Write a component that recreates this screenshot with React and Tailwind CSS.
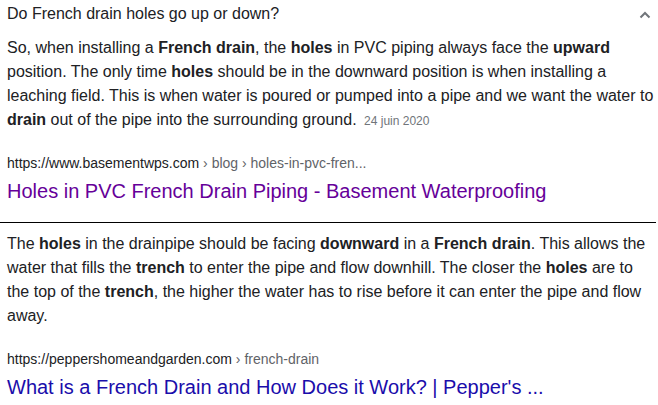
export default function App() {
  const font = { fontFamily: '"Liberation Sans", Arial, sans-serif' };
  return (
    <div className="w-[658px] h-[405px] bg-white overflow-hidden text-[#202124]" style={font}>
      <div className="pl-[7px] pr-[4px]">
        <div className="flex items-start justify-between mt-[2px] h-[24px]">
          <div className="text-[16px] leading-[24px] text-[#202124]">Do French drain holes go up or down?</div>
          <svg width="12" height="8" viewBox="0 0 12 8" className="mt-[9px] mr-[3px]">
            <path d="M1.5 6.5 L6 2 L10.5 6.5" fill="none" stroke="#70757a" strokeWidth="2" />
          </svg>
        </div>
        <div className="mt-[10px] text-[16px] leading-[24px] text-[#202124]">
          So, when installing a <b>French drain</b>, the <b>holes</b> in PVC piping always face the <b>upward</b> position. The only time <b>holes</b> should be in the downward position is when installing a leaching field. This is when water is poured or pumped into a pipe and we want the water to <b>drain</b> out of the pipe into the surrounding ground.{" "}
          <span className="text-[12px] text-[#70757a] ml-[3px]">24 juin 2020</span>
        </div>
        <div className="mt-[20px] text-[14px] leading-[20px] whitespace-nowrap">
          <span className="text-[#202124]">https://www.basementwps.com</span>
          <span className="text-[#5f6368]"> › blog › holes-in-pvc-fren...</span>
        </div>
        <div className="mt-[5px] text-[20px] leading-[26px] text-[#660099] whitespace-nowrap">
          Holes in PVC French Drain Piping - Basement Waterproofing
        </div>
      </div>
      <div className="mt-[18px] h-px bg-[#000] mr-[2px]"></div>
      <div className="pl-[7px] pr-[4px]">
        <div className="mt-[9px] text-[16px] leading-[24px] text-[#202124]">
          The <b>holes</b> in the drainpipe should be facing <b>downward</b> in a <b>French drain</b>. This allows the water that fills the <b>trench</b> to enter the pipe and flow downhill. The closer the <b>holes</b> are to the top of the <b>trench</b>, the higher the water has to rise before it can enter the pipe and flow away.
        </div>
        <div className="mt-[21px] text-[14px] leading-[20px] whitespace-nowrap">
          <span className="text-[#202124]">https://peppershomeandgarden.com</span>
          <span className="text-[#5f6368]"> › french-drain</span>
        </div>
        <div className="mt-[5px] text-[20px] leading-[26px] text-[#1a0dab] whitespace-nowrap">
          What is a French Drain and How Does it Work? | Pepper's ...
        </div>
      </div>
    </div>
  );
}
